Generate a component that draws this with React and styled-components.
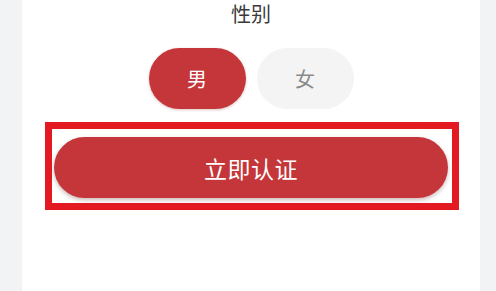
import React, { useState } from 'react';
import styled, { createGlobalStyle } from 'styled-components';

const GlobalStyle = createGlobalStyle`
  html, body {
    margin: 0;
    padding: 0;
    background: #f2f3f5;
  }
  #root {
    width: 496px;
    height: 291px;
    overflow: hidden;
  }
`;

const Page = styled.div`
  width: 496px;
  height: 291px;
  background: #f2f3f5;
  display: flex;
  padding-left: 22px;
  box-sizing: border-box;
  font-family: "Noto Sans CJK SC", "Noto Sans", sans-serif;
`;

const Card = styled.div`
  width: 458px;
  height: 100%;
  background: #ffffff;
  display: flex;
  flex-direction: column;
  align-items: center;
`;

const Label = styled.div`
  font-size: 20px;
  line-height: 28px;
  color: #3a3a3a;
`;

const GenderRow = styled.div`
  display: flex;
  gap: 11px;
  margin-top: 20px;
`;

const GenderButton = styled.button`
  width: 97px;
  height: 61px;
  border: none;
  border-radius: 31px;
  font-family: inherit;
  font-size: 20px;
  cursor: pointer;
  background: ${(props) => (props.active ? '#c5363a' : '#f4f4f4')};
  color: ${(props) => (props.active ? '#ffffff' : '#8a8a8a')};
  box-shadow: ${(props) =>
    props.active ? '0 1px 3px rgba(120, 20, 20, 0.25)' : 'none'};
`;

const Highlight = styled.div`
  align-self: flex-start;
  margin: 13px 0 0 23px;
  width: 414px;
  box-sizing: border-box;
  border: 7px solid #e41a22;
  padding: 8px 4px 5px 2px;
`;

const SubmitButton = styled.button`
  display: block;
  width: 100%;
  height: 61px;
  border: none;
  border-radius: 31px;
  background: #c5363a;
  color: #ffffff;
  font-family: inherit;
  font-size: 23px;
  letter-spacing: 0.5px;
  cursor: pointer;
  box-shadow: 0 2px 4px rgba(90, 20, 20, 0.3);
`;

export default function App() {
  const [gender, setGender] = useState('male');

  return (
    <>
      <GlobalStyle />
      <Page>
        <Card>
          <Label>性别</Label>
          <GenderRow>
            <GenderButton
              active={gender === 'male'}
              onClick={() => setGender('male')}
            >
              男
            </GenderButton>
            <GenderButton
              active={gender === 'female'}
              onClick={() => setGender('female')}
            >
              女
            </GenderButton>
          </GenderRow>
          <Highlight>
            <SubmitButton>立即认证</SubmitButton>
          </Highlight>
        </Card>
      </Page>
    </>
  );
}
